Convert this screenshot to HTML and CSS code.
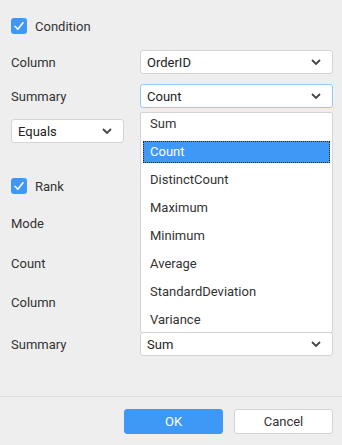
FILE: index.html
```html
<!DOCTYPE html>
<html lang="en">
<head>
  <meta charset="UTF-8">
  <title>Conditional Filter</title>
  <link rel="stylesheet" href="styles.css">
</head>
<body>
  <div class="dialog">
    <div class="content">
      <div class="check check-condition">
        <span class="box"><svg width="16" height="16" viewBox="0 0 16 16"><path d="M4 8.3 L6.8 11.2 L12 4.8" fill="none" stroke="#fff" stroke-width="1.6" stroke-linecap="round" stroke-linejoin="round"/></svg></span>
        <span>Condition</span>
      </div>

      <div class="field f-col1">
        <label>Column</label>
        <div class="select"><span>OrderID</span><svg class="chev" width="10" height="6" viewBox="0 0 10 6"><path d="M1 1 L5 5 L9 1" fill="none" stroke="#444" stroke-width="1.8"/></svg></div>
      </div>

      <div class="field f-sum1">
        <label>Summary</label>
        <div class="select focused"><span>Count</span><svg class="chev" width="10" height="6" viewBox="0 0 10 6"><path d="M1 1 L5 5 L9 1" fill="none" stroke="#444" stroke-width="1.8"/></svg></div>
      </div>

      <div class="select small f-equals"><span>Equals</span><svg class="chev" width="10" height="6" viewBox="0 0 10 6"><path d="M1 1 L5 5 L9 1" fill="none" stroke="#444" stroke-width="1.8"/></svg></div>

      <div class="check check-rank">
        <span class="box"><svg width="16" height="16" viewBox="0 0 16 16"><path d="M4 8.3 L6.8 11.2 L12 4.8" fill="none" stroke="#fff" stroke-width="1.6" stroke-linecap="round" stroke-linejoin="round"/></svg></span>
        <span>Rank</span>
      </div>

      <!-- these three sit under the open list, so their values are not shown -->
      <div class="field f-mode">
        <label>Mode</label>
        <div class="select"></div>
      </div>

      <div class="field f-count">
        <label>Count</label>
        <div class="select"></div>
      </div>

      <div class="field f-col2">
        <label>Column</label>
        <div class="select"></div>
      </div>

      <div class="field f-sum2">
        <label>Summary</label>
        <div class="select"><span>Sum</span><svg class="chev" width="10" height="6" viewBox="0 0 10 6"><path d="M1 1 L5 5 L9 1" fill="none" stroke="#444" stroke-width="1.8"/></svg></div>
      </div>

      <ul class="options">
        <li>Sum</li>
        <li class="active">Count</li>
        <li>DistinctCount</li>
        <li>Maximum</li>
        <li>Minimum</li>
        <li>Average</li>
        <li>StandardDeviation</li>
        <li>Variance</li>
      </ul>
    </div>

    <div class="footer">
      <button class="btn primary">OK</button>
      <button class="btn">Cancel</button>
    </div>
  </div>
</body>
</html>
```

FILE: styles.css
```css
* { box-sizing: border-box; }
body {
  margin: 0;
  background: #eeeeee;
  font-family: Roboto, 'Liberation Sans', sans-serif;
  font-size: 13px;
  color: #333;
}
.dialog {
  width: 342px;
  height: 445px;
  display: flex;
  flex-direction: column;
}
.content {
  position: relative;
  flex: 1;
  padding: 18px 9px 0 11px;
}
.check {
  display: flex;
  align-items: center;
  gap: 8px;
  height: 16px;
}
.box {
  width: 16px;
  height: 16px;
  border-radius: 3px;
  background: #3d98f6;
  display: flex;
}
.check-rank { margin-top: 35px; }
.field {
  display: grid;
  grid-template-columns: 129px 193px;
  align-items: center;
}
.field label { color: #333; }
.select {
  height: 24px;
  background: white;
  border: 1px solid #d4d4d4;
  border-radius: 3px;
  padding: 0 11px 0 6px;
  display: flex;
  align-items: center;
  justify-content: space-between;
  color: #222;
}
.select.focused { border-color: #95c8f8; }
.select.small { width: 113px; }
.f-col1 { margin-top: 16px; }
.f-sum1 { margin-top: 10px; }
.f-equals { margin-top: 11px; }
.f-mode { margin-top: 17px; }
.f-count { margin-top: 16px; }
.f-col2 { margin-top: 15px; }
.f-sum2 { margin-top: 18px; }
.options {
  position: absolute;
  top: 112px;
  left: 140px;
  width: 193px;
  margin: 0;
  padding: 0 2px 1px 2px;
  list-style: none;
  background: white;
  border: 1px solid #d4d4d4;
  border-radius: 2px;
  display: flex;
  flex-direction: column;
  gap: 6px;
}
.options li {
  height: 22px;
  line-height: 22px;
  padding-left: 7px;
  color: #333;
}
.options li.active {
  background: #3d98f6;
  color: white;
  border: 1px dotted #222;
  line-height: 20px;
  padding-left: 6px;
}
.footer {
  height: 49px;
  border-top: 1px solid #dcdcdc;
  display: flex;
  justify-content: flex-end;
  gap: 11px;
  padding: 12px 9px 0 0;
}
.btn {
  width: 99px;
  height: 25px;
  border: 1px solid #d4d4d4;
  border-radius: 3px;
  background: white;
  font-family: Roboto, 'Liberation Sans', sans-serif;
  font-size: 13px;
  color: #333;
}
.btn.primary {
  background: #3d98f6;
  border-color: #3d98f6;
  color: white;
}
```
